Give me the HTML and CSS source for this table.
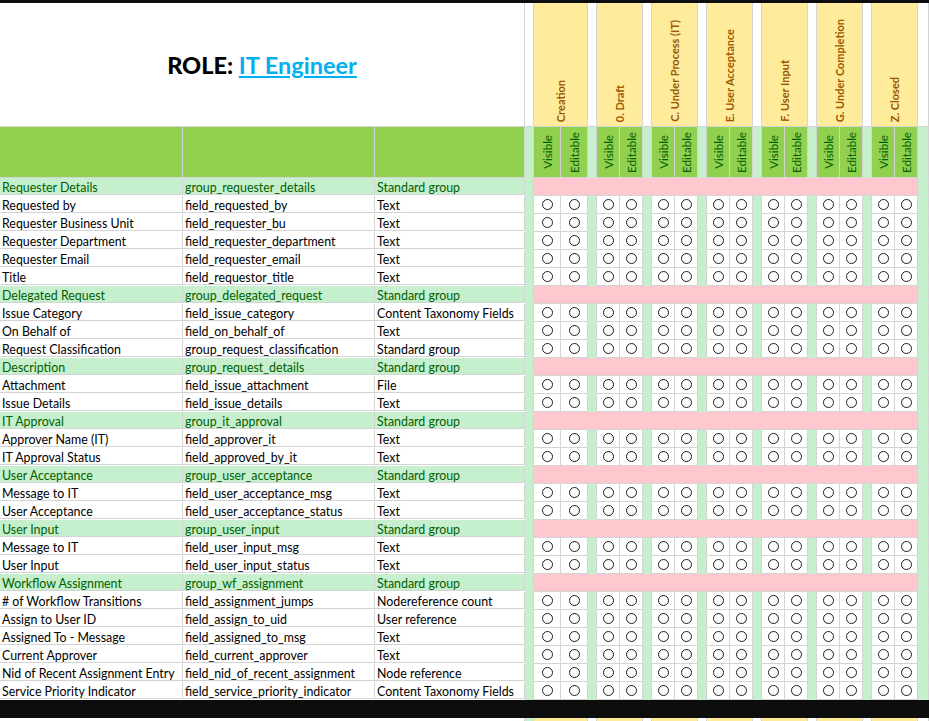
FILE: index.html
```html
<!DOCTYPE html>
<html>
<head>
<meta charset="utf-8">
<title>ROLE: IT Engineer</title>
<link rel="stylesheet" href="styles.css">
</head>
<body>
<div class="topbar"></div>
<div class="sheet">
  <div class="row head">
    <div class="title"><b>ROLE:</b>&nbsp;<a class="role">IT Engineer</a></div>
    <div class="w"></div>
    <div class="stage"><span>Creation</span></div><div class="w"></div>
    <div class="stage"><span>0. Draft</span></div><div class="w"></div>
    <div class="stage"><span>C. Under Process (IT)</span></div><div class="w"></div>
    <div class="stage"><span>E. User Acceptance</span></div><div class="w"></div>
    <div class="stage"><span>F. User Input</span></div><div class="w"></div>
    <div class="stage"><span>G. Under Completion</span></div><div class="w"></div>
    <div class="stage"><span>Z. Closed</span></div><div class="w"></div>
  </div>
  <div class="row sub">
    <div class="gh"></div><div class="gh"></div><div class="gh"></div><div class="s"></div>
    <div class="ve"><span>Visible</span></div><div class="ve"><span>Editable</span></div><div class="s"></div>
    <div class="ve"><span>Visible</span></div><div class="ve"><span>Editable</span></div><div class="s"></div>
    <div class="ve"><span>Visible</span></div><div class="ve"><span>Editable</span></div><div class="s"></div>
    <div class="ve"><span>Visible</span></div><div class="ve"><span>Editable</span></div><div class="s"></div>
    <div class="ve"><span>Visible</span></div><div class="ve"><span>Editable</span></div><div class="s"></div>
    <div class="ve"><span>Visible</span></div><div class="ve"><span>Editable</span></div><div class="s"></div>
    <div class="ve"><span>Visible</span></div><div class="ve"><span>Editable</span></div><div class="s"></div>
  </div>

  <div class="row grp"><div class="c">Requester Details</div><div class="c">group_requester_details</div><div class="c">Standard group</div><div class="s"></div><div class="pink"></div><div class="s"></div></div>
  <div class="row"><div class="c">Requested by</div><div class="c">field_requested_by</div><div class="c">Text</div><div class="s"></div><div class="o"></div><div class="o"></div><div class="s"></div><div class="o"></div><div class="o"></div><div class="s"></div><div class="o"></div><div class="o"></div><div class="s"></div><div class="o"></div><div class="o"></div><div class="s"></div><div class="o"></div><div class="o"></div><div class="s"></div><div class="o"></div><div class="o"></div><div class="s"></div><div class="o"></div><div class="o"></div><div class="s"></div></div>
  <div class="row"><div class="c">Requester Business Unit</div><div class="c">field_requester_bu</div><div class="c">Text</div><div class="s"></div><div class="o"></div><div class="o"></div><div class="s"></div><div class="o"></div><div class="o"></div><div class="s"></div><div class="o"></div><div class="o"></div><div class="s"></div><div class="o"></div><div class="o"></div><div class="s"></div><div class="o"></div><div class="o"></div><div class="s"></div><div class="o"></div><div class="o"></div><div class="s"></div><div class="o"></div><div class="o"></div><div class="s"></div></div>
  <div class="row"><div class="c">Requester Department</div><div class="c">field_requester_department</div><div class="c">Text</div><div class="s"></div><div class="o"></div><div class="o"></div><div class="s"></div><div class="o"></div><div class="o"></div><div class="s"></div><div class="o"></div><div class="o"></div><div class="s"></div><div class="o"></div><div class="o"></div><div class="s"></div><div class="o"></div><div class="o"></div><div class="s"></div><div class="o"></div><div class="o"></div><div class="s"></div><div class="o"></div><div class="o"></div><div class="s"></div></div>
  <div class="row"><div class="c">Requester Email</div><div class="c">field_requester_email</div><div class="c">Text</div><div class="s"></div><div class="o"></div><div class="o"></div><div class="s"></div><div class="o"></div><div class="o"></div><div class="s"></div><div class="o"></div><div class="o"></div><div class="s"></div><div class="o"></div><div class="o"></div><div class="s"></div><div class="o"></div><div class="o"></div><div class="s"></div><div class="o"></div><div class="o"></div><div class="s"></div><div class="o"></div><div class="o"></div><div class="s"></div></div>
  <div class="row"><div class="c">Title</div><div class="c">field_requestor_title</div><div class="c">Text</div><div class="s"></div><div class="o"></div><div class="o"></div><div class="s"></div><div class="o"></div><div class="o"></div><div class="s"></div><div class="o"></div><div class="o"></div><div class="s"></div><div class="o"></div><div class="o"></div><div class="s"></div><div class="o"></div><div class="o"></div><div class="s"></div><div class="o"></div><div class="o"></div><div class="s"></div><div class="o"></div><div class="o"></div><div class="s"></div></div>

  <div class="row grp"><div class="c">Delegated Request</div><div class="c">group_delegated_request</div><div class="c">Standard group</div><div class="s"></div><div class="pink"></div><div class="s"></div></div>
  <div class="row"><div class="c">Issue Category</div><div class="c">field_issue_category</div><div class="c">Content Taxonomy Fields</div><div class="s"></div><div class="o"></div><div class="o"></div><div class="s"></div><div class="o"></div><div class="o"></div><div class="s"></div><div class="o"></div><div class="o"></div><div class="s"></div><div class="o"></div><div class="o"></div><div class="s"></div><div class="o"></div><div class="o"></div><div class="s"></div><div class="o"></div><div class="o"></div><div class="s"></div><div class="o"></div><div class="o"></div><div class="s"></div></div>
  <div class="row"><div class="c">On Behalf of</div><div class="c">field_on_behalf_of</div><div class="c">Text</div><div class="s"></div><div class="o"></div><div class="o"></div><div class="s"></div><div class="o"></div><div class="o"></div><div class="s"></div><div class="o"></div><div class="o"></div><div class="s"></div><div class="o"></div><div class="o"></div><div class="s"></div><div class="o"></div><div class="o"></div><div class="s"></div><div class="o"></div><div class="o"></div><div class="s"></div><div class="o"></div><div class="o"></div><div class="s"></div></div>
  <div class="row"><div class="c">Request Classification</div><div class="c">group_request_classification</div><div class="c">Standard group</div><div class="s"></div><div class="o"></div><div class="o"></div><div class="s"></div><div class="o"></div><div class="o"></div><div class="s"></div><div class="o"></div><div class="o"></div><div class="s"></div><div class="o"></div><div class="o"></div><div class="s"></div><div class="o"></div><div class="o"></div><div class="s"></div><div class="o"></div><div class="o"></div><div class="s"></div><div class="o"></div><div class="o"></div><div class="s"></div></div>

  <div class="row grp"><div class="c">Description</div><div class="c">group_request_details</div><div class="c">Standard group</div><div class="s"></div><div class="pink"></div><div class="s"></div></div>
  <div class="row"><div class="c">Attachment</div><div class="c">field_issue_attachment</div><div class="c">File</div><div class="s"></div><div class="o"></div><div class="o"></div><div class="s"></div><div class="o"></div><div class="o"></div><div class="s"></div><div class="o"></div><div class="o"></div><div class="s"></div><div class="o"></div><div class="o"></div><div class="s"></div><div class="o"></div><div class="o"></div><div class="s"></div><div class="o"></div><div class="o"></div><div class="s"></div><div class="o"></div><div class="o"></div><div class="s"></div></div>
  <div class="row"><div class="c">Issue Details</div><div class="c">field_issue_details</div><div class="c">Text</div><div class="s"></div><div class="o"></div><div class="o"></div><div class="s"></div><div class="o"></div><div class="o"></div><div class="s"></div><div class="o"></div><div class="o"></div><div class="s"></div><div class="o"></div><div class="o"></div><div class="s"></div><div class="o"></div><div class="o"></div><div class="s"></div><div class="o"></div><div class="o"></div><div class="s"></div><div class="o"></div><div class="o"></div><div class="s"></div></div>

  <div class="row grp"><div class="c">IT Approval</div><div class="c">group_it_approval</div><div class="c">Standard group</div><div class="s"></div><div class="pink"></div><div class="s"></div></div>
  <div class="row"><div class="c">Approver Name (IT)</div><div class="c">field_approver_it</div><div class="c">Text</div><div class="s"></div><div class="o"></div><div class="o"></div><div class="s"></div><div class="o"></div><div class="o"></div><div class="s"></div><div class="o"></div><div class="o"></div><div class="s"></div><div class="o"></div><div class="o"></div><div class="s"></div><div class="o"></div><div class="o"></div><div class="s"></div><div class="o"></div><div class="o"></div><div class="s"></div><div class="o"></div><div class="o"></div><div class="s"></div></div>
  <div class="row"><div class="c">IT Approval Status</div><div class="c">field_approved_by_it</div><div class="c">Text</div><div class="s"></div><div class="o"></div><div class="o"></div><div class="s"></div><div class="o"></div><div class="o"></div><div class="s"></div><div class="o"></div><div class="o"></div><div class="s"></div><div class="o"></div><div class="o"></div><div class="s"></div><div class="o"></div><div class="o"></div><div class="s"></div><div class="o"></div><div class="o"></div><div class="s"></div><div class="o"></div><div class="o"></div><div class="s"></div></div>

  <div class="row grp"><div class="c">User Acceptance</div><div class="c">group_user_acceptance</div><div class="c">Standard group</div><div class="s"></div><div class="pink"></div><div class="s"></div></div>
  <div class="row"><div class="c">Message to IT</div><div class="c">field_user_acceptance_msg</div><div class="c">Text</div><div class="s"></div><div class="o"></div><div class="o"></div><div class="s"></div><div class="o"></div><div class="o"></div><div class="s"></div><div class="o"></div><div class="o"></div><div class="s"></div><div class="o"></div><div class="o"></div><div class="s"></div><div class="o"></div><div class="o"></div><div class="s"></div><div class="o"></div><div class="o"></div><div class="s"></div><div class="o"></div><div class="o"></div><div class="s"></div></div>
  <div class="row"><div class="c">User Acceptance</div><div class="c">field_user_acceptance_status</div><div class="c">Text</div><div class="s"></div><div class="o"></div><div class="o"></div><div class="s"></div><div class="o"></div><div class="o"></div><div class="s"></div><div class="o"></div><div class="o"></div><div class="s"></div><div class="o"></div><div class="o"></div><div class="s"></div><div class="o"></div><div class="o"></div><div class="s"></div><div class="o"></div><div class="o"></div><div class="s"></div><div class="o"></div><div class="o"></div><div class="s"></div></div>

  <div class="row grp"><div class="c">User Input</div><div class="c">group_user_input</div><div class="c">Standard group</div><div class="s"></div><div class="pink"></div><div class="s"></div></div>
  <div class="row"><div class="c">Message to IT</div><div class="c">field_user_input_msg</div><div class="c">Text</div><div class="s"></div><div class="o"></div><div class="o"></div><div class="s"></div><div class="o"></div><div class="o"></div><div class="s"></div><div class="o"></div><div class="o"></div><div class="s"></div><div class="o"></div><div class="o"></div><div class="s"></div><div class="o"></div><div class="o"></div><div class="s"></div><div class="o"></div><div class="o"></div><div class="s"></div><div class="o"></div><div class="o"></div><div class="s"></div></div>
  <div class="row"><div class="c">User Input</div><div class="c">field_user_input_status</div><div class="c">Text</div><div class="s"></div><div class="o"></div><div class="o"></div><div class="s"></div><div class="o"></div><div class="o"></div><div class="s"></div><div class="o"></div><div class="o"></div><div class="s"></div><div class="o"></div><div class="o"></div><div class="s"></div><div class="o"></div><div class="o"></div><div class="s"></div><div class="o"></div><div class="o"></div><div class="s"></div><div class="o"></div><div class="o"></div><div class="s"></div></div>

  <div class="row grp"><div class="c">Workflow Assignment</div><div class="c">group_wf_assignment</div><div class="c">Standard group</div><div class="s"></div><div class="pink"></div><div class="s"></div></div>
  <div class="row"><div class="c"># of Workflow Transitions</div><div class="c">field_assignment_jumps</div><div class="c">Nodereference count</div><div class="s"></div><div class="o"></div><div class="o"></div><div class="s"></div><div class="o"></div><div class="o"></div><div class="s"></div><div class="o"></div><div class="o"></div><div class="s"></div><div class="o"></div><div class="o"></div><div class="s"></div><div class="o"></div><div class="o"></div><div class="s"></div><div class="o"></div><div class="o"></div><div class="s"></div><div class="o"></div><div class="o"></div><div class="s"></div></div>
  <div class="row"><div class="c">Assign to User ID</div><div class="c">field_assign_to_uid</div><div class="c">User reference</div><div class="s"></div><div class="o"></div><div class="o"></div><div class="s"></div><div class="o"></div><div class="o"></div><div class="s"></div><div class="o"></div><div class="o"></div><div class="s"></div><div class="o"></div><div class="o"></div><div class="s"></div><div class="o"></div><div class="o"></div><div class="s"></div><div class="o"></div><div class="o"></div><div class="s"></div><div class="o"></div><div class="o"></div><div class="s"></div></div>
  <div class="row"><div class="c">Assigned To - Message</div><div class="c">field_assigned_to_msg</div><div class="c">Text</div><div class="s"></div><div class="o"></div><div class="o"></div><div class="s"></div><div class="o"></div><div class="o"></div><div class="s"></div><div class="o"></div><div class="o"></div><div class="s"></div><div class="o"></div><div class="o"></div><div class="s"></div><div class="o"></div><div class="o"></div><div class="s"></div><div class="o"></div><div class="o"></div><div class="s"></div><div class="o"></div><div class="o"></div><div class="s"></div></div>
  <div class="row"><div class="c">Current Approver</div><div class="c">field_current_approver</div><div class="c">Text</div><div class="s"></div><div class="o"></div><div class="o"></div><div class="s"></div><div class="o"></div><div class="o"></div><div class="s"></div><div class="o"></div><div class="o"></div><div class="s"></div><div class="o"></div><div class="o"></div><div class="s"></div><div class="o"></div><div class="o"></div><div class="s"></div><div class="o"></div><div class="o"></div><div class="s"></div><div class="o"></div><div class="o"></div><div class="s"></div></div>
  <div class="row"><div class="c">Nid of Recent Assignment Entry</div><div class="c">field_nid_of_recent_assignment</div><div class="c">Node reference</div><div class="s"></div><div class="o"></div><div class="o"></div><div class="s"></div><div class="o"></div><div class="o"></div><div class="s"></div><div class="o"></div><div class="o"></div><div class="s"></div><div class="o"></div><div class="o"></div><div class="s"></div><div class="o"></div><div class="o"></div><div class="s"></div><div class="o"></div><div class="o"></div><div class="s"></div><div class="o"></div><div class="o"></div><div class="s"></div></div>
  <div class="row"><div class="c">Service Priority Indicator</div><div class="c">field_service_priority_indicator</div><div class="c">Content Taxonomy Fields</div><div class="s"></div><div class="o"></div><div class="o"></div><div class="s"></div><div class="o"></div><div class="o"></div><div class="s"></div><div class="o"></div><div class="o"></div><div class="s"></div><div class="o"></div><div class="o"></div><div class="s"></div><div class="o"></div><div class="o"></div><div class="s"></div><div class="o"></div><div class="o"></div><div class="s"></div><div class="o"></div><div class="o"></div><div class="s"></div></div>
</div>
<div class="botbar"></div>
<div class="row tail">
  <div class="wide"></div><div class="s"></div>
  <div class="y"></div><div class="w"></div>
  <div class="y"></div><div class="w"></div>
  <div class="y"></div><div class="w"></div>
  <div class="y"></div><div class="w"></div>
  <div class="y"></div><div class="w"></div>
  <div class="y"></div><div class="w"></div>
  <div class="y"></div><div class="w"></div>
</div>
</body>
</html>
```
FILE: styles.css
```css
:root {
  --cols: 183px 192px 150px 9px 27px 27px 9px 23px 23px 9px 23px 23px 9px 23px 23px 9px 23px 23px 9px 23px 23px 9px 23px 23px 11px;
  --grid: #d4d4d4;
  --good: #c6efce;
  --good-text: #006100;
  --bad: #ffc7ce;
  --neutral: #ffeb9c;
  --neutral-text: #9c5700;
  --accent: #92d050;
}

html, body {
  margin: 0;
  padding: 0;
  background: #fff;
}

body {
  width: 929px;
  height: 721px;
  overflow: hidden;
  font-family: Lato, "Liberation Sans", sans-serif;
  font-size: 12.4px;
  color: #000;
}

.topbar {
  height: 3px;
  background: #0d0d0d;
}

.botbar {
  height: 18px;
  background: #0d0d0d;
}

.row {
  display: grid;
  grid-template-columns: var(--cols);
  height: 18px;
}

.row > div {
  box-sizing: border-box;
  border-right: 1px solid var(--grid);
  border-bottom: 1px solid var(--grid);
  min-width: 0;
}

.c {
  padding-left: 2px;
  line-height: 19px;
  height: 17px;
  white-space: nowrap;
  overflow: hidden;
}

.grp .c {
  background: var(--good);
  color: var(--good-text);
}

.row > .s {
  background: var(--good);
  border-bottom-color: var(--good);
}

.pink {
  grid-column: span 20;
  background: var(--bad);
}

.o {
  display: flex;
  align-items: center;
  justify-content: center;
}

.o::before {
  content: "";
  width: 11px;
  height: 11px;
  box-sizing: border-box;
  border: 1.4px solid #1c1c1c;
  border-radius: 50%;
}

/* header */
.head {
  height: 124px;
}

.title {
  grid-column: span 3;
  display: flex;
  align-items: center;
  justify-content: center;
  font-size: 23.5px;
  font-weight: bold;
  padding-top: 1px;
}

.role {
  color: #00b0f0;
  text-decoration: underline;
  text-decoration-thickness: 2px;
  text-underline-offset: 2px;
}

.w {
  background: #fff;
}

.stage {
  grid-column: span 2;
  background: var(--neutral);
  display: flex;
  justify-content: center;
  align-items: flex-end;
  padding-bottom: 4px;
}

.stage span,
.ve span {
  writing-mode: vertical-rl;
  transform: rotate(180deg);
  white-space: nowrap;
}

.stage span {
  font-weight: bold;
  font-size: 11px;
  color: var(--neutral-text);
  line-height: 12px;
}

.sub {
  height: 51px;
}

.gh {
  background: var(--accent);
}

.ve {
  background: var(--accent);
  display: flex;
  justify-content: center;
  align-items: center;
}

.ve span {
  color: var(--good-text);
  font-size: 11.6px;
  line-height: 13px;
}

/* peek of next block */
.tail {
  height: 3px;
}

.tail > div {
  border-bottom: none;
}

.wide {
  grid-column: span 3;
  background: #fff;
}

.y {
  grid-column: span 2;
  background: var(--neutral);
}

.row.tail > .s {
  border-bottom: none;
}
```
